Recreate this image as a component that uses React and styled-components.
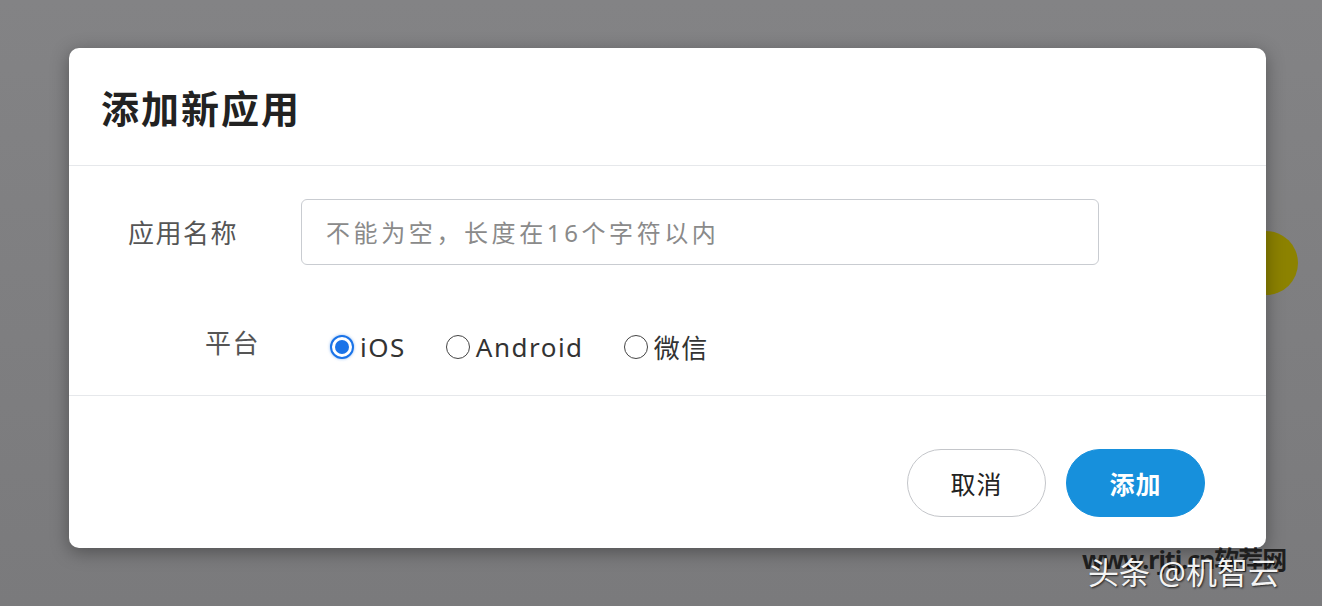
import React, { useState } from 'react'
import styled, { createGlobalStyle } from 'styled-components'

const GlobalStyle = createGlobalStyle`
  html, body {
    margin: 0;
    padding: 0;
    background: #7c7c7e;
  }
  body {
    font-family: "Noto Sans", "Noto Sans CJK SC", sans-serif;
  }
`

const Stage = styled.div`
  position: relative;
  width: 1322px;
  height: 606px;
  overflow: hidden;
  background: linear-gradient(180deg, #838385 0%, #7a7a7c 100%);
  padding: 48px 0 0 69px;
  box-sizing: border-box;
`

const YellowDot = styled.div`
  position: absolute;
  left: 1234px;
  top: 231px;
  width: 64px;
  height: 64px;
  border-radius: 50%;
  background: #8c8200;
`

const Modal = styled.div`
  position: relative;
  width: 1197px;
  height: 500px;
  background: #fff;
  border-radius: 10px;
  box-shadow: 0 4px 18px rgba(0, 0, 0, 0.35);
  display: flex;
  flex-direction: column;
`

const Header = styled.div`
  height: 118px;
  display: flex;
  align-items: center;
  padding-left: 32px;
  border-bottom: 1px solid #e6e8eb;
  box-sizing: border-box;
`

const Title = styled.h1`
  margin: 0;
  font-size: 38px;
  font-weight: 700;
  color: #222;
  letter-spacing: 2px;
`

const Body = styled.div`
  height: 230px;
  border-bottom: 1px solid #e6e8eb;
  box-sizing: border-box;
  display: flex;
  flex-direction: column;
  padding-top: 33px;
`

const Row = styled.div`
  display: grid;
  grid-template-columns: 232px 798px;
  align-items: center;
  height: ${({ h }) => h}px;
  margin-top: ${({ gap }) => gap || 0}px;
`

const Label = styled.label`
  padding-left: ${({ indent }) => indent}px;
  font-size: 26px;
  letter-spacing: 1.5px;
  color: #555;
  margin-top: ${({ shift }) => shift || 0}px;
`

const Input = styled.input`
  width: 100%;
  height: 66px;
  box-sizing: border-box;
  border: 1px solid #c9ccd1;
  border-radius: 6px;
  padding: 0 24px;
  font-family: "Noto Sans", "Noto Sans CJK SC", sans-serif;
  font-size: 24px;
  letter-spacing: 3.6px;
  color: #333;
  outline: none;
  &::placeholder {
    color: #8a8a8a;
  }
`

const RadioGroup = styled.div`
  display: flex;
  align-items: center;
  padding-left: 29px;
  gap: 40px;
  margin-top: 4px;
`

const RadioItem = styled.label`
  display: flex;
  align-items: center;
  gap: 6px;
  font-size: 26px;
  letter-spacing: 1.5px;
  color: #333;
  cursor: pointer;
`

const Circle = styled.span`
  width: 24px;
  height: 24px;
  box-sizing: border-box;
  border-radius: 50%;
  border: ${({ checked }) => (checked ? '2px solid #1a73e8' : '1.5px solid #444')};
  background: #fff;
  display: flex;
  align-items: center;
  justify-content: center;
  box-shadow: ${({ checked }) => (checked ? '0 0 3px rgba(26,115,232,0.5)' : 'none')};
  &::after {
    content: '';
    width: 14px;
    height: 14px;
    border-radius: 50%;
    background: #1a73e8;
    display: ${({ checked }) => (checked ? 'block' : 'none')};
  }
`

const Footer = styled.div`
  flex: 1;
  display: flex;
  align-items: center;
  justify-content: flex-end;
  gap: 20px;
  padding: 22px 61px 0 0;
`

const Button = styled.button`
  width: 139px;
  height: 68px;
  border-radius: 34px;
  font-family: "Noto Sans", "Noto Sans CJK SC", sans-serif;
  font-size: 25px;
  letter-spacing: 1px;
  cursor: pointer;
  border: 1px solid ${({ primary }) => (primary ? '#1790dc' : '#c4c6ca')};
  background: ${({ primary }) => (primary ? '#1790dc' : '#fff')};
  color: ${({ primary }) => (primary ? '#fff' : '#222')};
  font-weight: ${({ primary }) => (primary ? 700 : 400)};
`

// watermark stamped over the screenshot corner
const Watermark = styled.div`
  position: absolute;
  right: 8px;
  bottom: 20px;
  width: 232px;
  height: 46px;
`

const MarkSite = styled.span`
  position: absolute;
  left: 0;
  top: 0;
  font-size: 25px;
  font-weight: 700;
  color: #1e1e1e;
  white-space: nowrap;
  letter-spacing: -1px;
`

const MarkAuthor = styled.span`
  position: absolute;
  left: 6px;
  top: 8px;
  font-size: 31px;
  color: #fff;
  white-space: nowrap;
  text-shadow: 1px 1px 2px rgba(0, 0, 0, 0.8);
  opacity: 0.92;
`

const platforms = ['iOS', 'Android', '微信']

export default function App() {
  const [platform, setPlatform] = useState('iOS')
  return (
    <>
      <GlobalStyle />
      <Stage>
        <YellowDot />
        <Modal>
          <Header>
            <Title>添加新应用</Title>
          </Header>
          <Body>
            <Row h={66}>
              <Label indent={59}>应用名称</Label>
              <Input placeholder="不能为空，长度在16个字符以内" />
            </Row>
            <Row h={32} gap={59}>
              <Label indent={136} shift={-6}>平台</Label>
              <RadioGroup>
                {platforms.map((p) => (
                  <RadioItem key={p} onClick={() => setPlatform(p)}>
                    <Circle checked={platform === p} />
                    {p}
                  </RadioItem>
                ))}
              </RadioGroup>
            </Row>
          </Body>
          <Footer>
            <Button>取消</Button>
            <Button primary>添加</Button>
          </Footer>
        </Modal>
        <Watermark>
          <MarkSite>www.rjtj.cn软荐网</MarkSite>
          <MarkAuthor>头条 @机智云</MarkAuthor>
        </Watermark>
      </Stage>
    </>
  )
}
